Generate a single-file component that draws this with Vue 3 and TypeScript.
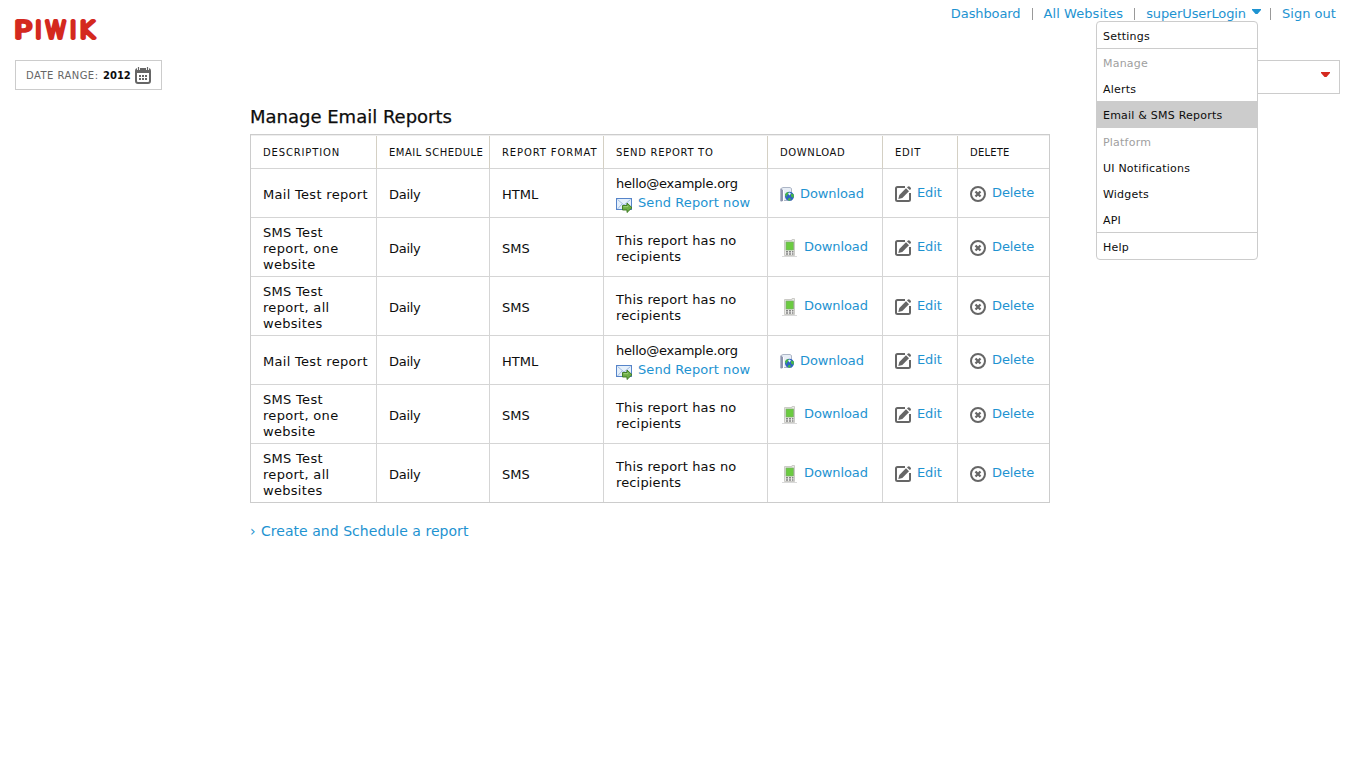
<script setup lang="ts">
interface Report {
  description: string
  format: 'HTML' | 'SMS'
}

const top: string[] = ['Dashboard', 'All Websites']
const headers: { label: string; tracking: number }[] = [
  { label: 'Description', tracking: 0.85 },
  { label: 'Email schedule', tracking: 0.48 },
  { label: 'Report format', tracking: 0.87 },
  { label: 'Send report to', tracking: 0.7 },
  { label: 'Download', tracking: 0.62 },
  { label: 'Edit', tracking: 0.8 },
  { label: 'Delete', tracking: 0.2 },
]

const base: Report[] = [
  { description: 'Mail Test report', format: 'HTML' },
  { description: 'SMS Test report, one website', format: 'SMS' },
  { description: 'SMS Test report, all websites', format: 'SMS' },
]
const reports: Report[] = [...base, ...base]

const menu: { label: string; kind: string }[] = [
  { label: 'Settings', kind: 'first' },
  { label: 'Manage', kind: 'category ruled' },
  { label: 'Alerts', kind: '' },
  { label: 'Email & SMS Reports', kind: 'active' },
  { label: 'Platform', kind: 'category' },
  { label: 'UI Notifications', kind: '' },
  { label: 'Widgets', kind: '' },
  { label: 'API', kind: '' },
  { label: 'Help', kind: 'ruled' },
]
</script>

<template>
  <div class="page">
    <header class="header">
      <svg class="logo" width="90" height="34" viewBox="-4 -4 90 34">
        <text transform="translate(-1 21.300) scale(1.300 1)">P</text>
        <text x="20.100" y="21.3">I</text>
        <text transform="translate(29.900 21.300) scale(.960 1)">W</text>
        <text x="54.700" y="21.3">I</text>
        <text transform="translate(63.200 21.300) scale(1.100 1)">K</text>
      </svg>
      <nav class="topnav">
        <template v-for="item in top" :key="item">
          <a class="navlink" :class="{ wide: item === 'All Websites' }">{{ item }}</a><span class="bar"></span>
        </template>
        <span class="user">
          <a class="navlink login">superUserLogin</a>
          <svg class="caret" width="9" height="5" viewBox="0 0 9 5"><path d="M0 0h9v1L5.500 5h-2L0 1z" fill="#1e93d1" /></svg>
          <ul class="menu">
            <li v-for="m in menu" :key="m.label" :class="m.kind">{{ m.label }}</li>
          </ul>
        </span>
        <span class="bar short"></span>
        <a class="navlink signout">Sign out</a>
      </nav>
    </header>

    <div class="controls">
      <div class="period">
        <span class="range">DATE RANGE:</span><b>2012</b>
        <svg width="16" height="17" viewBox="0 0 16 17">
          <rect x="1" y="2" width="14" height="14" rx="2" fill="#fff" stroke="#666" stroke-width="2" />
          <path d="M1 2h14v4H1z" fill="#666" />
          <path d="M3.500 0v3M12.500 0v3" stroke="#fff" stroke-width="3" />
          <path d="M3.500 0v3M12.500 0v3" stroke="#666" stroke-width="1.2" />
          <path d="M6.500 1h3v2h-3z" fill="#666" />
          <path d="M4 8h2v2H4zM7 8h2v2H7zM10 8h2v2h-2zM4 11h2v2H4zM7 11h2v2H7zM10 11h2v2h-2z" fill="#666" />
        </svg>
      </div>
      <div class="site">
        <svg width="9" height="5" viewBox="0 0 9 5"><path d="M0 0h9v1L5.500 5h-2L0 1z" fill="#d4291f" /></svg>
      </div>
    </div>

    <main class="content">
      <h2>Manage Email Reports</h2>
      <div class="table">
        <div class="row head">
          <div v-for="h in headers" :key="h.label" class="cell" :style="{ letterSpacing: h.tracking + 'px' }">{{ h.label }}</div>
        </div>
        <div v-for="(r, i) in reports" :key="i" class="row" :class="r.format === 'HTML' ? 'mail' : 'sms'">
          <div class="cell text description">{{ r.description }}</div>
          <div class="cell text schedule">Daily</div>
          <div class="cell text">{{ r.format }}</div>
          <div v-if="r.format === 'HTML'" class="cell recipients">
            <span class="address">hello@example.org</span>
            <a class="send">
              <svg width="17" height="15" viewBox="0 0 17 15">
                <rect x=".5" y=".5" width="15" height="11" fill="#e5f0fb" stroke="#5684c9" />
                <path d="M1.500 1.500L8 7l6.500-5.500M1.500 11L6 6M14.500 11L10 6" fill="none" stroke="#a3bce0" />
                <path d="M6.500 7.500H11V5l5 4.700-5 4.800V12H6.500z" fill="#6dae45" stroke="#38761d" stroke-width=".9" />
                <path d="M7.500 8.700h4.300V7.500" fill="none" stroke="#a9d889" stroke-width=".8" />
              </svg>
              <span>Send Report now</span>
            </a>
          </div>
          <div v-else class="cell text none">This report has no recipients</div>
          <div class="cell">
            <a class="action download">
              <svg v-if="r.format === 'HTML'" width="15" height="16" viewBox="0 0 15 16">
                <path d="M1 1.500l2-1h7l1.500 1v12H2L.5 14z" fill="#e8eef6" stroke="#a5afc0" stroke-width=".9" />
                <path d="M.500 1.500L3 3v11l-2 .500z" fill="#8d93ad" />
                <path d="M3.500 3v11" stroke="#fff" />
                <circle cx="9.500" cy="9.300" r="4.500" fill="#2f62c4" />
                <path d="M5 7.500c1-2.500 3-2.500 4-2l-1 2-1 1-.5 2zM11 6.500l3 1-.5 3.500-2.500-1.500zM7.500 12l2.500-1.500 1 2-2 1.500z" fill="#45b649" />
                <path d="M8 6.500l1.500-1 1.500 1-1.500 2z" fill="#dff3ff" />
              </svg>
              <svg v-else width="15" height="18" viewBox="0 0 15 18">
                <path d="M0 17.500h15" stroke="#d9d9d9" />
                <path d="M2.500 1.500H10V.5h2.500V16.500h-10z" fill="#ebebe8" stroke="#cbcbc6" />
                <rect x="4" y="3" width="7.500" height="8" fill="#6bcb40" stroke="#7ba86b" stroke-width=".7" />
                <path d="M4 12.800h2M7 12.800h2M10 12.800h1.500M4 15h2M7 15h2M10 15h1.500" stroke="#858585" stroke-width="1.400" />
              </svg>
              <span>Download</span>
            </a>
          </div>
          <div class="cell">
            <a class="action edit">
              <svg width="17" height="17" viewBox="0 0 17 17">
                <path d="M10 1H2.500Q1 1 1 2.500v11Q1 15 2.500 15h11q1.500 0 1.500-1.500V7" fill="none" stroke="#666" stroke-width="2" />
                <path d="M3.300 13l1-4L11 2.300l3 3L7.300 12z" fill="#666" />
                <path d="M12 1.500l.7-.7q1-1 2.200 0l.6.600q1 1 0 2l-.7.700z" fill="#666" />
              </svg>
              <span>Edit</span>
            </a>
          </div>
          <div class="cell">
            <a class="action delete">
              <svg width="16" height="16" viewBox="0 0 16 16">
                <circle cx="8" cy="8" r="7" fill="none" stroke="#666" stroke-width="2" />
                <path d="M5.500 5.500l5 5M10.500 5.500l-5 5" stroke="#666" stroke-width="2.300" />
              </svg>
              <span>Delete</span>
            </a>
          </div>
        </div>
      </div>
      <a class="create"><span class="chevron">›</span>Create and Schedule a report</a>
    </main>
  </div>
</template>

<style>
body {
  margin: 0;
  background: #fff;
}
</style>

<style scoped>
.page {
  width: 1350px;
  height: 768px;
  overflow: hidden;
  font: 13px/16px "DejaVu Sans", Verdana, sans-serif;
  color: #0d0d0d;
}
a {
  color: #1e93d1;
}
.header {
  display: flex;
  justify-content: space-between;
  height: 60px;
  padding: 0 14px 0 11px;
  box-sizing: border-box;
}
.logo {
  margin-top: 13px;
  overflow: visible;
}
.logo text {
  font: 200 23px "DejaVu Sans", sans-serif;
  fill: #d4291f;
  stroke: #d4291f;
  stroke-width: 3.800px;
  stroke-linejoin: round;
}
.topnav {
  display: flex;
  height: 16px;
  margin-top: 6px;
}
.navlink {
  white-space: nowrap;
  letter-spacing: -0.1px;
}
.navlink.wide {
  letter-spacing: 0.070px;
}
.navlink.login {
  letter-spacing: -0.110px;
}
.navlink.signout {
  letter-spacing: 0.030px;
}
.bar {
  width: 1px;
  height: 12px;
  margin: 2px 11px 0 11px;
  background: #999;
}
.bar.short {
  margin-left: 9px;
}
.user {
  position: relative;
  display: flex;
}
.caret {
  margin: 3px 0 0 6px;
}
.menu {
  position: absolute;
  z-index: 2;
  top: 15px;
  right: 3px;
  width: 160px;
  margin: 0;
  padding: 0;
  list-style: none;
  background: #fff;
  border: 1px solid #ccc;
  border-radius: 4px;
  font-size: 11px;
  letter-spacing: 0.220px;
  color: #0d0d0d;
}
.menu li {
  height: 26px;
  padding: 2px 6px 0;
  line-height: 26px;
  box-sizing: border-box;
}
.menu .active {
  height: 27px;
  background: #ccc;
}
.menu .category {
  color: #a0a0a0;
}
.menu .ruled {
  height: 27px;
  border-top: 1px solid #ccc;
}
.controls {
  display: flex;
  justify-content: space-between;
  height: 34px;
  padding: 0 10px 0 15px;
}
.period {
  display: flex;
  width: 147px;
  height: 30px;
  padding-left: 10px;
  border: 1px solid #ccc;
  box-sizing: border-box;
  font-size: 10px;
  line-height: 29px;
  white-space: nowrap;
}
.range {
  width: 77px;
  letter-spacing: 0.450px;
  color: #666;
}
.period b {
  width: 32px;
}
.period svg {
  margin-top: 6px;
}
.site {
  display: flex;
  justify-content: flex-end;
  width: 220px;
  padding: 11px 9px 0 0;
  border: 1px solid #ccc;
  box-sizing: border-box;
}
.content {
  width: 800px;
  margin-left: 250px;
  padding-top: 12px;
}
h2 {
  height: 28px;
  margin: 0;
  font-size: 18px;
  font-weight: 400;
  line-height: 22px;
  -webkit-text-stroke: 0.25px #0d0d0d;
}
.table {
  border: 1px solid #ccc;
}
.row {
  display: grid;
  grid-template-columns: 126px 113px 114px 164px 115px 75px 91px;
  height: 59px;
}
.row.head {
  height: 34px;
  border-top: 1px solid #eee;
  box-sizing: border-box;
  font-size: 10px;
  text-transform: uppercase;
  white-space: nowrap;
}
.row.mail {
  height: 49px;
}
.row:last-child {
  height: 58px;
}
.cell {
  display: flex;
  flex-direction: column;
  justify-content: center;
  padding-left: 12px;
  border-right: 1px solid #d5d5d5;
  border-bottom: 1px solid #d5d5d5;
  box-sizing: border-box;
}
.head .cell {
  padding-top: 1px;
  border-right-color: #d4d0c4;
}
.cell:last-child {
  border-right: 0;
}
.row:last-child .cell {
  border-bottom: 0;
}
.cell.text {
  padding-top: 3px;
  padding-right: 7px;
}
.description {
  letter-spacing: 0.300px;
}
.schedule {
  letter-spacing: -0.300px;
}
.none {
  letter-spacing: 0.140px;
}
.address {
  letter-spacing: -0.240px;
}
.recipients {
  gap: 3px;
}
.recipients.cell {
  padding-bottom: 1px;
  padding-top: 1px;
}
.send {
  display: flex;
  gap: 5px;
  height: 16px;
  letter-spacing: 0.080px;
  white-space: nowrap;
}
.send svg {
  margin-top: 3px;
}
.action {
  display: flex;
  gap: 5px;
  height: 16px;
}
.action svg {
  flex: none;
  margin-top: 1px;
}
.action span {
  letter-spacing: -0.100px;
}
.mail .download {
  margin-top: 2px;
}
.sms .download {
  gap: 7px;
  padding-left: 2px;
}
.sms .download svg {
  margin-top: 0;
}
.action.delete {
  gap: 6px;
}
.create {
  display: flex;
  margin-top: 19px;
  font-size: 14px;
  line-height: 18px;
  letter-spacing: 0.040px;
}
.chevron {
  width: 11px;
}
</style>
